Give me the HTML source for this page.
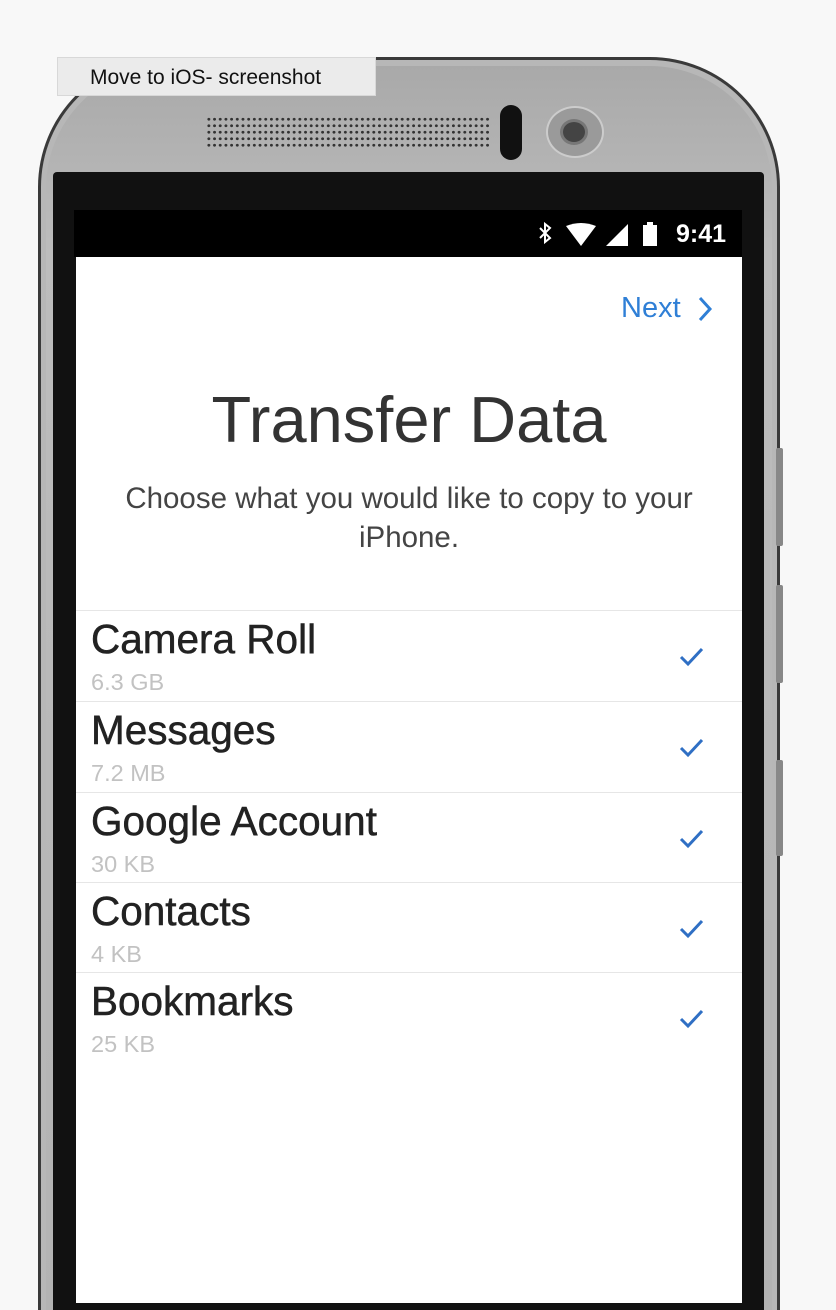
<!DOCTYPE html>
<html><head><meta charset="utf-8"><style>
*{margin:0;padding:0;box-sizing:border-box}
html,body{width:836px;height:1310px;overflow:hidden}
body{background:#f8f8f8;position:relative;font-family:"Liberation Sans",sans-serif}
.a{position:absolute}
.row{position:absolute;left:76px;width:666px;height:90px;border-top:1.5px solid #e6e6e6}
.row .t{position:absolute;left:15px;top:5px;font-size:40.5px;color:#222;-webkit-text-stroke:0.5px #222}
.row .s{position:absolute;left:15px;top:58px;font-size:23.5px;color:#c2c2c2}
.row svg{position:absolute;left:602px;top:34px}
</style></head><body>
<!-- phone body -->
<div class="a" style="left:38px;top:57px;width:742px;height:1253px;border-radius:130px 130px 0 0;background:#3a3a3a"></div>
<div class="a" style="left:41px;top:60px;width:736px;height:1250px;border-radius:127px 127px 0 0;background:#b7b7b7"></div>
<div class="a" style="left:46px;top:66px;width:726px;height:1244px;border-radius:122px 122px 0 0;background:linear-gradient(#a9a9a9,#bdbdbd 15%,#b3b3b3)"></div>
<!-- side buttons -->
<div class="a" style="left:776px;top:448px;width:7px;height:98px;background:#888;border-radius:2px"></div>
<div class="a" style="left:776px;top:585px;width:7px;height:98px;background:#888;border-radius:2px"></div>
<div class="a" style="left:776px;top:760px;width:7px;height:96px;background:#888;border-radius:2px"></div>
<!-- black front -->
<div class="a" style="left:53px;top:172px;width:711px;height:1138px;background:#111;border-radius:4px 4px 0 0"></div>
<!-- speaker -->
<div class="a" style="left:206px;top:116px;width:285px;height:34px;background-image:radial-gradient(circle,#333 1.3px,transparent 1.6px);background-size:5.7px 6.5px"></div>
<div class="a" style="left:500px;top:105px;width:22px;height:55px;background:#111;border-radius:11px"></div>
<div class="a" style="left:546px;top:106px;width:58px;height:52px;border-radius:50%;background:#9a9a9a;border:2px solid #ccc"></div>
<div class="a" style="left:560px;top:119px;width:28px;height:26px;border-radius:50%;background:#444;border:3px solid #777"></div>
<!-- label -->
<div class="a" style="left:57px;top:57px;width:319px;height:39px;background:#ebebeb;border:1px solid #d8d8d8;font-size:21px;color:#111;padding:8px 0 0 32px">Move to iOS- screenshot</div>
<!-- status bar -->
<div class="a" style="left:74px;top:210px;width:668px;height:47px;background:#000"></div>
<svg class="a" style="left:534px;top:220px" width="160" height="28" viewBox="0 0 160 28">
<path d="M6 8l10 10-5 4V4l5 4L6 18" stroke="#fff" stroke-width="2" fill="none"/>
<path d="M32 6q15-6 30 0L47 26z" fill="#fff"/>
<path d="M72 26L94 4v22z" fill="#fff"/>
<rect x="109" y="5" width="14" height="21" fill="#fff"/><rect x="113" y="2" width="6" height="4" fill="#fff"/>
</svg>
<div class="a" style="left:676px;top:220px;font-size:25px;color:#fff;font-weight:bold">9:41</div>
<!-- screen -->
<div class="a" style="left:76px;top:257px;width:666px;height:1046px;background:#fff"></div>
<div class="a" style="left:621px;top:292px;font-size:29px;color:#2f7fd6">Next</div>
<svg class="a" style="left:697px;top:296px" width="16" height="26"><path d="M3 2l10 11L3 24" stroke="#2f7fd6" stroke-width="3" fill="none"/></svg>
<div class="a" style="left:76px;top:382px;width:666px;text-align:center;font-size:65px;color:#333">Transfer Data</div>
<div class="a" style="left:70px;top:479px;width:678px;text-align:center;font-size:29.5px;color:#444;line-height:39px">Choose what you would like to copy to your<br>iPhone.</div>
<div class="row" style="top:610px"><div class="t">Camera Roll</div><div class="s">6.3 GB</div><svg width="26" height="22"><path d="M3 12l7 7L24 4" stroke="#2f6fc4" stroke-width="3" fill="none"/></svg></div>
<div class="row" style="top:701px"><div class="t">Messages</div><div class="s">7.2 MB</div><svg width="26" height="22"><path d="M3 12l7 7L24 4" stroke="#2f6fc4" stroke-width="3" fill="none"/></svg></div>
<div class="row" style="top:792px"><div class="t">Google Account</div><div class="s">30 KB</div><svg width="26" height="22"><path d="M3 12l7 7L24 4" stroke="#2f6fc4" stroke-width="3" fill="none"/></svg></div>
<div class="row" style="top:882px"><div class="t">Contacts</div><div class="s">4 KB</div><svg width="26" height="22"><path d="M3 12l7 7L24 4" stroke="#2f6fc4" stroke-width="3" fill="none"/></svg></div>
<div class="row" style="top:972px"><div class="t">Bookmarks</div><div class="s">25 KB</div><svg width="26" height="22"><path d="M3 12l7 7L24 4" stroke="#2f6fc4" stroke-width="3" fill="none"/></svg></div>
</body></html>
